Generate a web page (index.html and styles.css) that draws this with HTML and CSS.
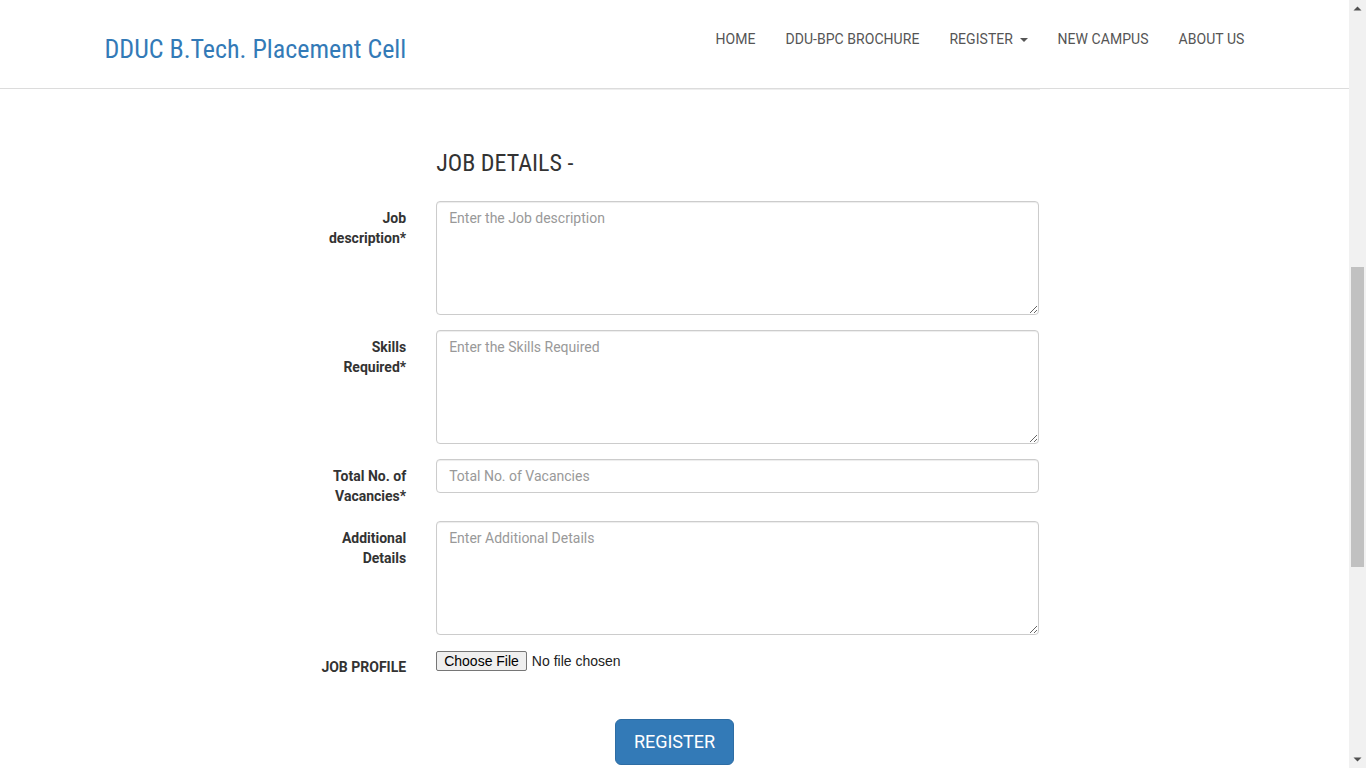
FILE: index.html
```html
<!DOCTYPE html>
<html lang="en">
<head>
<meta charset="utf-8">
<title>DDUC B.Tech. Placement Cell</title>
<link rel="stylesheet" href="styles.css">
</head>
<body>
<div class="page">
  <div class="viewport">
    <header class="navbar">
      <div class="nav-container">
        <a class="brand" href="#">DDUC B.Tech. Placement Cell</a>
        <ul class="nav">
          <li><a href="#">HOME</a></li>
          <li><a href="#">DDU-BPC BROCHURE</a></li>
          <li><a href="#">REGISTER <span class="caret"></span></a></li>
          <li><a href="#">NEW CAMPUS</a></li>
          <li><a href="#">ABOUT US</a></li>
        </ul>
      </div>
    </header>
    <main class="content">
      <div class="form-wrap">
        <div class="divider"></div>
        <form class="form-horizontal">
          <div class="form-group heading-row">
            <div class="label-col"></div>
            <div class="input-col"><h3 class="section-title">JOB DETAILS -</h3></div>
          </div>
          <div class="form-group">
            <label class="label-col" for="jd">Job description*</label>
            <div class="input-col"><textarea id="jd" class="form-control area" rows="5" placeholder="Enter the Job description"></textarea></div>
          </div>
          <div class="form-group">
            <label class="label-col" for="sk">Skills Required*</label>
            <div class="input-col"><textarea id="sk" class="form-control area" rows="5" placeholder="Enter the Skills Required"></textarea></div>
          </div>
          <div class="form-group">
            <label class="label-col" for="vac">Total No. of Vacancies*</label>
            <div class="input-col"><input id="vac" type="text" class="form-control" placeholder="Total No. of Vacancies"></div>
          </div>
          <div class="form-group">
            <label class="label-col" for="ad">Additional Details</label>
            <div class="input-col"><textarea id="ad" class="form-control area" rows="5" placeholder="Enter Additional Details"></textarea></div>
          </div>
          <div class="form-group">
            <label class="label-col" for="jp">JOB PROFILE</label>
            <div class="input-col"><input id="jp" type="file" class="file-input"></div>
          </div>
          <div class="submit-row">
            <button type="button" class="btn-register">REGISTER</button>
          </div>
        </form>
      </div>
    </main>
  </div>
  <div class="scrollbar">
    <div class="sb-btn"><svg width="9" height="5" viewBox="0 0 9 5"><polygon points="0.5,4.5 4.5,0.5 8.5,4.5" fill="#505050"/></svg></div>
    <div class="sb-track"><div class="sb-thumb"></div></div>
    <div class="sb-btn"><svg width="9" height="5" viewBox="0 0 9 5"><polygon points="0.5,0.5 8.5,0.5 4.5,4.5" fill="#505050"/></svg></div>
  </div>
</div>
</body>
</html>
```
FILE: styles.css
```css
html, body {
  margin: 0;
  padding: 0;
  height: 100%;
  overflow: hidden;
}
body {
  font-family: Roboto, "Liberation Sans", sans-serif;
  font-size: 14px;
  line-height: 20px;
  color: #333;
  background: #fff;
}
* { box-sizing: border-box; }

.page {
  display: flex;
  width: 1366px;
  height: 768px;
}
.viewport {
  flex: 1;
  min-width: 0;
  overflow: hidden;
}

/* navbar */
.navbar {
  height: 89px;
  background: #fff;
  border-bottom: 1px solid #dcdcdc;
}
.nav-container {
  width: 1140px;
  margin: 0 auto;
  display: flex;
  justify-content: space-between;
  align-items: flex-start;
}
.brand {
  font-family: "Roboto Condensed", Roboto, sans-serif;
  font-stretch: 75%;
  font-size: 26px;
  line-height: 30px;
  margin-top: 34px;
  color: #337ab7;
  text-decoration: none;
}
.nav {
  display: flex;
  list-style: none;
  margin: 29px -15px 0 0;
  padding: 0;
}
.nav a {
  display: block;
  padding: 0 15px;
  line-height: 20px;
  font-size: 14px;
  letter-spacing: 0.05px;
  color: #555;
  text-decoration: none;
}
.caret {
  display: inline-block;
  width: 0;
  height: 0;
  margin-left: 3px;
  vertical-align: middle;
  border-top: 4px solid #555;
  border-left: 4px solid transparent;
  border-right: 4px solid transparent;
}

/* content */
.form-wrap {
  width: 730px;
  margin: 0 auto;
}
.divider {
  border-top: 1px solid #eee;
}
.form-group {
  display: flex;
  margin: 0 -15px 15px;
}
.label-col {
  width: 16.6667%;
  flex: none;
  padding: 7px 15px 0;
  text-align: right;
  font-weight: 700;
  line-height: 20px;
}
.input-col {
  flex: 1;
  min-width: 0;
  padding: 0 15px;
}
.heading-row {
  margin-top: 58px;
  margin-bottom: 23px;
}
.section-title {
  margin: 0;
  font-family: "Roboto Condensed", Roboto, sans-serif;
  font-stretch: 75%;
  font-weight: 400;
  font-size: 24px;
  line-height: 30px;
  color: #333;
}
.form-control {
  display: block;
  width: 100%;
  height: 34px;
  padding: 6px 12px;
  font-family: inherit;
  font-size: 14px;
  line-height: 20px;
  color: #555;
  background: #fff;
  border: 1px solid #ccc;
  border-radius: 4px;
  box-shadow: inset 0 1px 1px rgba(0,0,0,.075);
  margin: 0;
}
.form-control::placeholder { color: #999; }
.input-col .form-control { width: 603px; }
.area {
  height: 114px;
  resize: vertical;
}
.file-input {
  display: block;
  margin-top: 1px;
  font-family: "Liberation Sans", Arial, sans-serif;
  font-size: 14px;
  color: #222;
}
.file-input::file-selector-button {
  font: inherit;
  padding: 1px 7px;
  margin-right: 5px;
  border: 1px solid #767676;
  border-radius: 2px;
  background: #efefef;
  color: #000;
}
.submit-row {
  padding-top: 27px;
  text-align: center;
}
.btn-register {
  font-family: Roboto, sans-serif;
  font-size: 18px;
  line-height: 24px;
  padding: 10px 18px;
  color: #fff;
  background: #337ab7;
  border: 1px solid #2e6da4;
  border-radius: 6px;
}

/* fake scrollbar */
.scrollbar {
  width: 17px;
  flex: none;
  background: #f1f1f1;
  display: flex;
  flex-direction: column;
}
.sb-btn {
  height: 17px;
  display: flex;
  align-items: center;
  justify-content: center;
}
.sb-btn svg { display: block; }
.sb-track {
  flex: 1;
  padding-top: 250px;
}
.sb-thumb {
  height: 300px;
  margin: 0 2px;
  background: #c1c1c1;
}
```
